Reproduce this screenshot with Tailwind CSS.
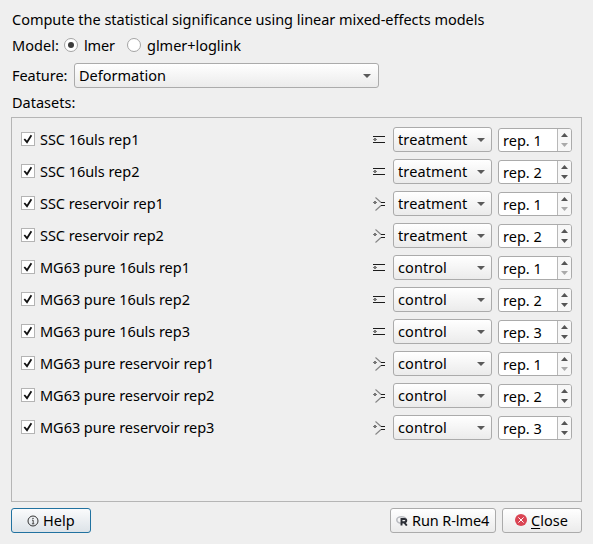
<!DOCTYPE html>
<html lang="en">
<head>
<meta charset="utf-8">
<title>Linear mixed-effects models</title>
<script src="https://cdn.jsdelivr.net/npm/@tailwindcss/browser@4"></script>
</head>
<body class="w-[593px] h-[544px] overflow-hidden bg-[#efefef] text-black font-['Noto_Sans','Open_Sans',sans-serif] text-[14.5px] leading-[20px] whitespace-nowrap px-[11px] flex flex-col">
<p class="pl-px mt-[9px] h-[21px] tracking-[-0.025px]">Compute the statistical significance using linear mixed-effects models</p>
<div class="flex items-center pl-px mt-[5px] h-5">
  <span class="w-[52px] tracking-[0.05px]">Model:</span>
  <span class="size-[14px] rounded-full border border-[#a4a4a4] bg-white flex items-center justify-center"><span class="size-[6px] rounded-full bg-[#3c3c3c]"></span></span>
  <span class="w-[43px] ml-[6px] tracking-[-0.15px]">lmer</span>
  <span class="size-[14px] rounded-full border border-[#a4a4a4] bg-white"></span>
  <span class="ml-[6px] tracking-[-0.03px]">glmer+loglink</span>
</div>
<div class="flex items-center pl-px mt-[8px] h-[25px]">
  <span class="w-[62px] pb-px tracking-[-0.05px]">Feature:</span>
  <div class="w-[305px] h-[25px] rounded-[3px] border border-[#ababab] bg-linear-to-b from-white to-[#ebebeb] flex items-center justify-between pl-1 pr-[7px]">
    <span class="pb-[2px]">Deformation</span>
    <svg class="w-[8px] h-[4px]" viewBox="0 0 8 4"><path d="M0 0H8L4 4Z" fill="#5a5a5a"/></svg>
  </div>
</div>
<p class="pl-px mt-[4px] h-[21px]">Datasets:</p>
<div id="datasets" class="mt-[4px] h-[385px] border border-[#b5b5b5] pl-[9px] pr-[9px] pt-[9px] flex flex-col gap-[7px]"></div>
<div class="flex mt-[6px] h-[25px]">
  <div class="w-[80px] rounded-[3px] border border-[#2172a0] bg-linear-to-b from-[#fafbfc] to-[#dde3e8] flex items-center pl-[15px]">
    <svg class="size-[12px]" viewBox="0 0 12 12"><circle cx="6" cy="6" r="5" fill="none" stroke="#333" stroke-width="1"/><path d="M5 5.2H6.2V8.6M4.9 8.8H7.3" fill="none" stroke="#333" stroke-width=".9"/><circle cx="6" cy="3.4" r=".7" fill="#333"/></svg>
    <span class="ml-1 pb-[2px]">Help</span>
  </div>
  <div class="ml-auto w-[106px] rounded-[3px] border border-[#ababab] bg-linear-to-b from-white to-[#ebebeb] flex items-center pl-[5px]">
    <svg class="w-[12px] h-[10px]" viewBox="0 0 12 10"><ellipse cx="5.5" cy="4" rx="4.7" ry="3.2" fill="none" stroke="#b9bbc0" stroke-width="1.6"/><path d="M5.5 9.5V3H8.4Q10.3 3 10.3 4.6T8.4 6.2H6M8 6.2L10.8 9.6" fill="none" stroke="#2c2f36" stroke-width="1.9"/></svg>
    <span class="ml-1 pb-[2px] tracking-[-0.1px]">Run R-lme4</span>
  </div>
  <div class="ml-[6px] w-[80px] rounded-[3px] border border-[#ababab] bg-linear-to-b from-white to-[#ebebeb] flex items-center pl-[12px]">
    <svg class="size-[12px] mb-px" viewBox="0 0 12 12"><circle cx="6" cy="6" r="6" fill="#da4453"/><path d="M3.4 3.4L8.6 8.6M8.6 3.4L3.4 8.6" stroke="#fff" stroke-width="1"/></svg>
    <span class="ml-1 pb-[2px]"><span class="underline underline-offset-[2px] decoration-1">C</span>lose</span>
  </div>
</div>
<script>
const channel = '<svg class="w-[12px] h-[12px] mt-[7px]" viewBox="0 0 12 12" shape-rendering="crispEdges"><path d="M0 2.5H12M0 8.5H12" stroke="#1c1c1c"/><path d="M0 5h4v1H0zM1 4h2v3H1z" fill="#777"/></svg>';
const reservoir = '<svg class="w-[13px] h-[14px] mt-[6px]" viewBox="0 0 13 14"><path d="M2.5 .5L8 5.5M2.5 13.5L8 8.5" fill="none" stroke="#858585" stroke-width="1.1"/><path d="M8 5.5H12M8 8.5H12" stroke="#1c1c1c"/><path d="M0 5h4v1H0zM1 4h2v3H1z" fill="#777"/></svg>';
const rows = [
  ["SSC 16uls rep1", 0, "treatment", 1], ["SSC 16uls rep2", 0, "treatment", 2],
  ["SSC reservoir rep1", 1, "treatment", 1], ["SSC reservoir rep2", 1, "treatment", 2],
  ["MG63 pure 16uls rep1", 0, "control", 1], ["MG63 pure 16uls rep2", 0, "control", 2], ["MG63 pure 16uls rep3", 0, "control", 3],
  ["MG63 pure reservoir rep1", 1, "control", 1], ["MG63 pure reservoir rep2", 1, "control", 2], ["MG63 pure reservoir rep3", 1, "control", 3]
];
document.getElementById("datasets").innerHTML = rows.map(([name, res, group, rep]) => `
<div class="flex items-center h-[25px] shrink-0">
  <span class="size-[14px] mb-px border border-[#b4b4b4] bg-white flex items-center justify-center"><svg class="size-[10px]" viewBox="0 0 10 10"><path d="M1.3 5L4 8.2L8.4 1.2" fill="none" stroke="#111" stroke-width="1.8"/></svg></span>
  <span class="ml-[5px] pb-[2px] tracking-[-0.04px]">${name}</span>
  <span class="ml-auto w-[20px] self-start">${res ? reservoir : channel}</span>
  <span class="w-[99px] h-[25px] rounded-[3px] border border-[#ababab] bg-linear-to-b from-white to-[#ebebeb] flex items-center justify-between pl-1 pr-[6px]"><span class="pb-[2px] tracking-[0.1px]">${group}</span><svg class="w-[8px] h-[4px]" viewBox="0 0 8 4"><path d="M0 0H8L4 4Z" fill="#5a5a5a"/></svg></span>
  <span class="ml-[6px] mt-px w-[74px] h-[24px] rounded-[3px] border border-[#ababab] bg-white flex overflow-hidden"><span class="pl-1 pt-px flex-1">rep. ${rep}</span><span class="w-[14px] border-l border-[#b8b8b8] bg-[#f7f7f7] flex flex-col items-center justify-center gap-[6px]"><svg class="w-[7px] h-[4px]" viewBox="0 0 7 4"><path d="M0 4H7L3.5 0Z" fill="#555"/></svg><svg class="w-[7px] h-[4px]" viewBox="0 0 7 4"><path d="M0 0H7L3.5 4Z" fill="${rep === 1 ? "#aaa" : "#555"}"/></svg></span></span>
</div>`).join("");
</script>
</body>
</html>
